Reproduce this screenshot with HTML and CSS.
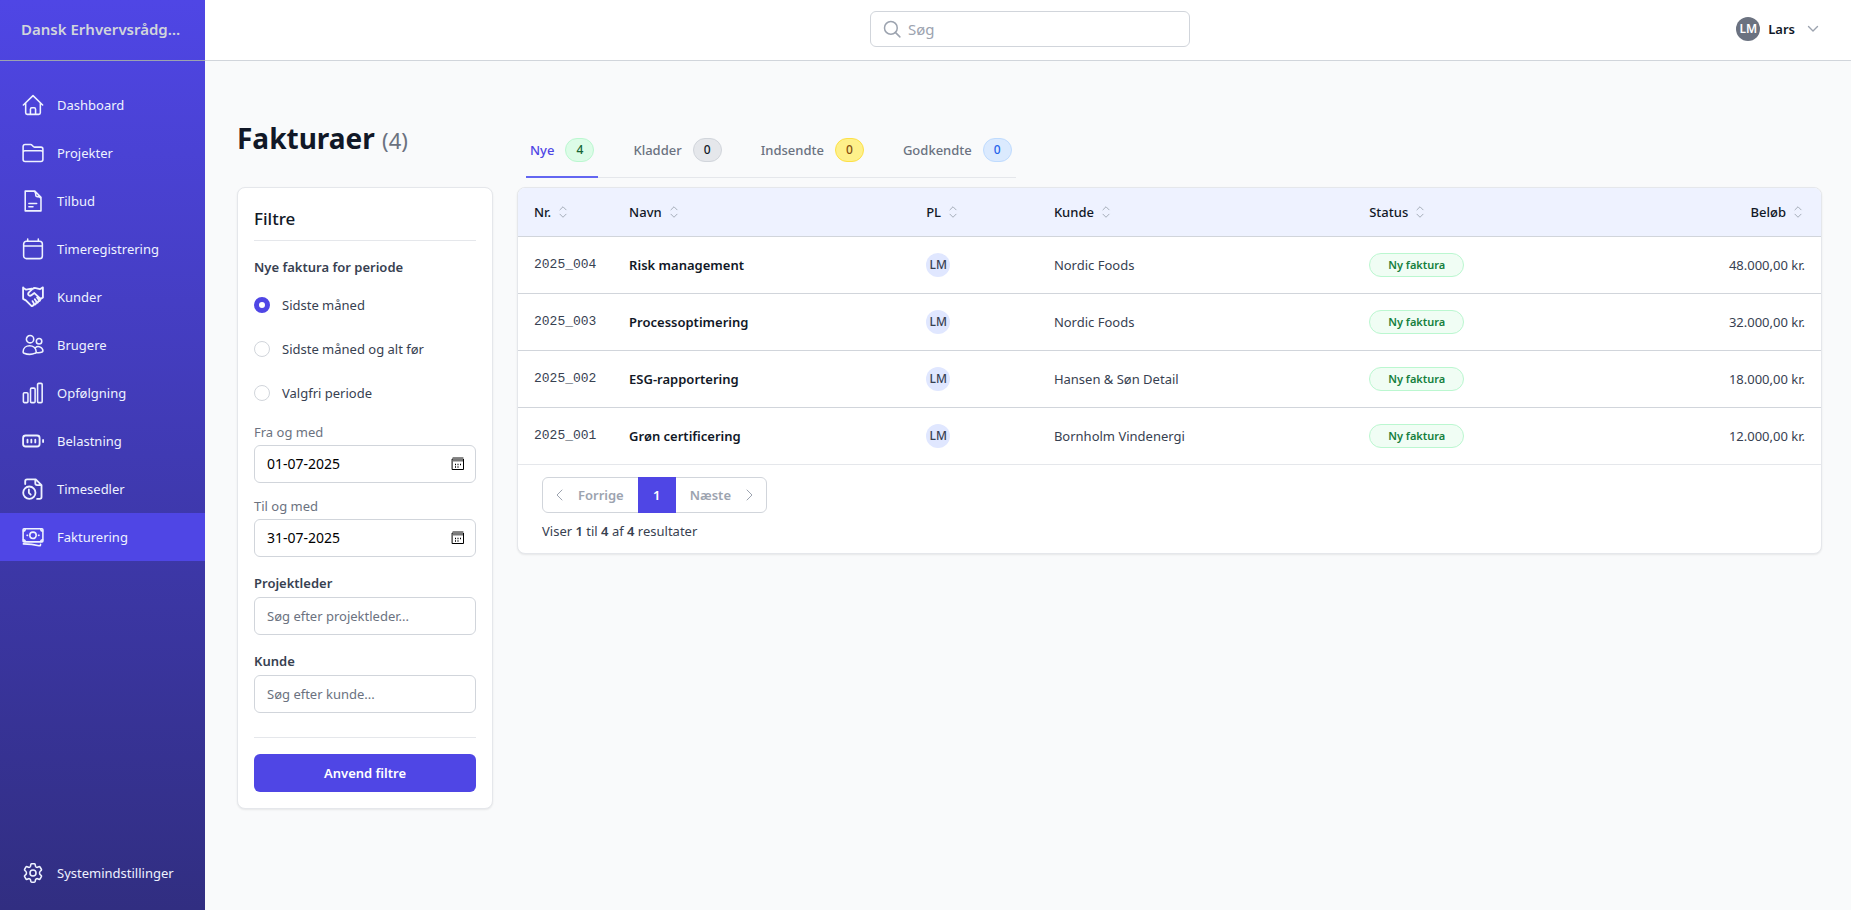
FILE: index.html
```html
<!DOCTYPE html>
<html lang="da">
<head>
    <meta charset="utf-8">
    <title>Fakturaer</title>
    <link rel="stylesheet" href="styles.css">
</head>

<body>
    <svg class="sprite" aria-hidden="true">
        <symbol id="sort" viewBox="0 0 16 16">
            <path d="M4.500 5.500l3.500-3.500 3.500 3.500M4.500 10.500l3.500 3.500 3.500-3.500"/>
        </symbol>
        <symbol id="calendar" viewBox="0 0 14 14">
            <path d="M1.500 2h11v10.500h-11z" stroke="#000" stroke-width="1"/>
            <path d="M2 .5h10" stroke="#888" stroke-width="1"/>
            <path d="M2 3.500h10" stroke="#777" stroke-width="2" stroke-linecap="butt"/>
            <path d="M4 7.500h1M6.500 7.500h1M9 7.500h1M4 10h1M6.500 10h1" stroke="#000" stroke-width="1.300" stroke-linecap="butt"/>
        </symbol>
    </svg>

    <div class="layout">
        <aside class="sidebar">
            <a class="brand" href="#">Dansk Erhvervsrådgivning</a>
            <nav class="menu">
                <a href="#"><svg viewBox="0 0 24 24"><path d="M1.500 12 12 1.800l10.500 10.200M4 10V20.500q0 1.700 1.700 1.700h12.600q1.700 0 1.700-1.700V10M9.200 22v-5.500q0-1.500 1.500-1.500h2.600q1.500 0 1.500 1.500v5.500"/></svg>Dashboard</a>
                <a href="#"><svg viewBox="0 0 24 24"><path d="M1.200 19V5q0-2.200 2.200-2.200h6q1 0 1.600.8l1.300 1.400q.5.600 1.300.600h7q2.200 0 2.200 2.200V19q0 2.200-2.200 2.200h-17.200q-2.200 0-2.200-2.200zM1.200 11.500q0-2 2-2h17.600q2 0 2 2"/></svg>Projekter</a>
                <a href="#"><svg viewBox="0 0 24 24"><path d="M3.500 1.200H14l6.700 6.700v14.900H3.500zM13 1.200q2 1 2 3.500v1q0 1.500 1.500 1.500h1q2 0 3.200 2M7.500 14.700h8.500M7.500 18.200h4.500"/></svg>Tilbud</a>
                <a href="#"><svg viewBox="0 0 24 24"><rect x="1.800" y="3.500" width="20.400" height="19" rx="3"/><path d="M2 8.800h20M6.200 1.200V3.500M17.800 1.200V3.500"/></svg>Timeregistrering</a>
                <a href="#"><svg class="bold" viewBox="0 0 24 24"><path d="M1.200 1.500v12.500l3 1.700 5.800 5.800q1.200.900 2.300-.300.300-.500.400-1.200 2 .800 2.800-1.600 2.100.200 2.300-1.900 2 0 2.200-2.200l2.800-1.800V1.500l-3.300 2-4.500-1.200q-2-.4-3.500.900L7.500 7q-1.400 1.700-.2 3 1.400 1.300 3.300-.1l2.900-2.200 6.500 6M1.200 2 4.500 4l6-1.200M11.500 16.500l1.500 2.500M14 14.500l2 3M16.500 12.500l2 2.800"/></svg>Kunder</a>
                <a href="#"><svg viewBox="0 0 24 24"><circle cx="8.800" cy="5.700" r="4"/><circle cx="18.600" cy="8" r="3"/><path d="M1.200 19.500C1.200 10.500 15.500 10.500 15.500 19.500q0 1-1 1.400-6 2.600-12.300 0-1-.4-1-1.400zM14.500 15c3.500-3 8.300 0 8.300 3.500q0 .8-.8 1.100-3 1.200-6 .6"/></svg>Brugere</a>
                <a href="#"><svg viewBox="0 0 24 24"><rect x="1.500" y="11.700" width="5" height="10.800" rx="1.200"/><rect x="9.300" y="6.700" width="5" height="15.800" rx="1.200"/><rect x="17" y="1.500" width="5" height="21" rx="1.200"/></svg>Opfølgning</a>
                <a href="#"><svg class="bold" viewBox="0 0 24 24"><rect x="1.200" y="6" width="18" height="12" rx="2.800"/><path d="M6 10.500v3M10.200 10.500v3M14.500 10.500v3M23 10.800v2.400"/></svg>Belastning</a>
                <a href="#"><svg class="bold" viewBox="0 0 24 24"><circle cx="8" cy="16" r="6.700"/><path d="M7.500 12.500v3.700l2 2M3.500 6.500V3.500q0-2 2-2h9.500l6.300 6.300v13q0 2-2 2h-2.800M14.500 1.500v4.300q0 2 2 2h4.800"/></svg>Timesedler</a>
                <a class="active" href="#"><svg viewBox="0 0 24 24"><rect x="1.200" y="3" width="21.600" height="14.300" rx="1"/><circle cx="12" cy="10.200" r="3.500"/><path d="M1.500 5.500q2 0 2-2.300M22.500 5.500q-2 0-2-2.300M1.500 15q2 0 2 2M22.500 15q-2 0-2 2M5.500 10.200h.6M18 10.200h.6M1.500 19.500q9.500 0 17 2 1.700.500 1.700-1v-.5"/></svg>Fakturering</a>
            </nav>
            <nav class="menu menu-bottom">
                <a href="#"><svg viewBox="0 0 24 24"><path d="M9.600 2.900c.1-.500.600-.9 1.100-.9h2.600c.500 0 1 .4 1.100.9l.3 1.600c.1.400.3.700.6.900l.5.300c.3.200.7.200 1.100.1l1.500-.6c.5-.2 1.100 0 1.400.5l1.300 2.200c.3.500.2 1.100-.3 1.400l-1.200 1.100c-.3.200-.4.600-.4 1v1.200c0 .4.100.7.400 1l1.200 1c.5.300.6 1 .3 1.400l-1.300 2.300c-.3.500-.9.700-1.400.5l-1.500-.6c-.4-.1-.8-.1-1.100.1l-.5.300c-.3.200-.5.500-.6.900l-.3 1.600c-.1.500-.6.900-1.100.9h-2.600c-.5 0-1-.4-1.100-.9l-.3-1.600c-.1-.4-.3-.7-.6-.9l-.5-.3c-.3-.2-.7-.2-1.100-.1l-1.500.6c-.5.200-1.100 0-1.400-.5l-1.300-2.300c-.3-.4-.2-1.100.3-1.400l1.200-1c.3-.3.400-.6.400-1v-1.200c0-.4-.1-.8-.4-1l-1.200-1.100c-.5-.3-.6-.9-.3-1.400l1.300-2.200c.3-.5.900-.7 1.400-.5l1.500.6c.4.100.8.100 1.100-.1l.5-.3c.3-.2.5-.5.600-.9z"/><circle cx="12" cy="12" r="3.300"/></svg>Systemindstillinger</a>
            </nav>
        </aside>

        <div class="page">
            <header class="topbar">
                <label class="search">
                    <svg viewBox="0 0 24 24"><circle cx="10.500" cy="10.500" r="8.500"/><path d="M16.500 16.500l6 6"/></svg>
                    <input type="search" placeholder="Søg" aria-label="Søg">
                </label>
                <button class="user" type="button">
                    <span class="user-avatar">LM</span>
                    Lars
                    <svg viewBox="0 0 12 12"><path d="M1.500 3.500l4.500 4.500 4.500-4.500"/></svg>
                </button>
            </header>

            <main class="content">
                <h1>Fakturaer <span>(4)</span></h1>

                <nav class="tabs">
                    <a class="active" href="#">Nye <span class="count green">4</span></a>
                    <a href="#">Kladder <span class="count gray">0</span></a>
                    <a href="#">Indsendte <span class="count yellow">0</span></a>
                    <a href="#">Godkendte <span class="count blue">0</span></a>
                </nav>

                <form class="card filters">
                    <h2>Filtre</h2>
                    <fieldset>
                        <legend>Nye faktura for periode</legend>
                        <label class="radio"><input type="radio" name="period" checked>Sidste måned</label>
                        <label class="radio"><input type="radio" name="period">Sidste måned og alt før</label>
                        <label class="radio"><input type="radio" name="period">Valgfri periode</label>
                    </fieldset>

                    <label class="date-label" for="from">Fra og med</label>
                    <div class="field date">
                        <input id="from" type="text" value="01-07-2025">
                        <svg><use href="#calendar"/></svg>
                    </div>
                    <label class="date-label" for="to">Til og med</label>
                    <div class="field date">
                        <input id="to" type="text" value="31-07-2025">
                        <svg><use href="#calendar"/></svg>
                    </div>

                    <label class="field-label" for="leader">Projektleder</label>
                    <div class="field"><input id="leader" type="text" placeholder="Søg efter projektleder..."></div>
                    <label class="field-label" for="customer">Kunde</label>
                    <div class="field"><input id="customer" type="text" placeholder="Søg efter kunde..."></div>

                    <div class="actions">
                        <button type="submit">Anvend filtre</button>
                    </div>
                </form>

                <section class="card invoices">
                    <table>
                        <colgroup>
                            <col class="col-nr">
                            <col class="col-name">
                            <col class="col-pl">
                            <col class="col-customer">
                            <col class="col-status">
                            <col>
                        </colgroup>
                        <thead>
                            <tr>
                                <th><button type="button">Nr. <svg><use href="#sort"/></svg></button></th>
                                <th><button type="button">Navn <svg><use href="#sort"/></svg></button></th>
                                <th><button type="button">PL <svg><use href="#sort"/></svg></button></th>
                                <th><button type="button">Kunde <svg><use href="#sort"/></svg></button></th>
                                <th><button type="button">Status <svg><use href="#sort"/></svg></button></th>
                                <th class="amount"><button type="button">Beløb <svg><use href="#sort"/></svg></button></th>
                            </tr>
                        </thead>
                        <tbody>
                            <tr>
                                <td class="nr">2025_004</td>
                                <td class="name">Risk management</td>
                                <td><span class="avatar">LM</span></td>
                                <td>Nordic Foods</td>
                                <td><span class="status">Ny faktura</span></td>
                                <td class="amount">48.000,00 kr.</td>
                            </tr>
                            <tr>
                                <td class="nr">2025_003</td>
                                <td class="name">Processoptimering</td>
                                <td><span class="avatar">LM</span></td>
                                <td>Nordic Foods</td>
                                <td><span class="status">Ny faktura</span></td>
                                <td class="amount">32.000,00 kr.</td>
                            </tr>
                            <tr>
                                <td class="nr">2025_002</td>
                                <td class="name">ESG-rapportering</td>
                                <td><span class="avatar">LM</span></td>
                                <td>Hansen &amp; Søn Detail</td>
                                <td><span class="status">Ny faktura</span></td>
                                <td class="amount">18.000,00 kr.</td>
                            </tr>
                            <tr>
                                <td class="nr">2025_001</td>
                                <td class="name">Grøn certificering</td>
                                <td><span class="avatar">LM</span></td>
                                <td>Bornholm Vindenergi</td>
                                <td><span class="status">Ny faktura</span></td>
                                <td class="amount">12.000,00 kr.</td>
                            </tr>
                        </tbody>
                    </table>

                    <div class="table-footer">
                        <div class="pagination">
                            <button type="button"><svg viewBox="0 0 12 12"><path d="M8 1L3 6l5 5"/></svg>Forrige</button>
                            <button class="current" type="button">1</button>
                            <button type="button">Næste<svg viewBox="0 0 12 12"><path d="M4 1l5 5-5 5"/></svg></button>
                        </div>
                        <p>Viser <b>1</b> til <b>4</b> af <b>4</b> resultater</p>
                    </div>
                </section>
            </main>
        </div>
    </div>
</body>
</html>
```
FILE: styles.css
```css
* {
    box-sizing: border-box;
}

body {
    margin: 0;
    background: #f9fafb;
    color: #374151;
    font-family: "Noto Sans", "Open Sans", sans-serif;
    font-size: 13px;
    line-height: 20px;
}

a {
    color: inherit;
    text-decoration: none;
}

button,
input {
    font: inherit;
    color: inherit;
}

button {
    padding: 0;
    border: none;
    background: none;
    cursor: pointer;
}

svg {
    flex: none;
    fill: none;
    stroke: currentColor;
    stroke-linecap: round;
    stroke-linejoin: round;
}

.sprite {
    display: none;
}

.layout {
    display: flex;
    min-height: 100vh;
}

/* Sidebar */
.sidebar {
    display: flex;
    flex-direction: column;
    flex: none;
    width: 205px;
    padding-bottom: 13px;
    background: linear-gradient(#4f46e5, #312e81);
    color: #eef2ff;
}

.brand {
    height: 61px;
    padding: 0 21px;
    border-bottom: 1px solid #9ca3af;
    overflow: hidden;
    color: #d1d5db;
    font-size: 15px;
    font-weight: 600;
    line-height: 58px;
    text-overflow: ellipsis;
    white-space: nowrap;
}

.menu {
    margin-top: 20px;
}

.menu-bottom {
    margin-top: auto;
}

.menu a {
    display: flex;
    align-items: center;
    gap: 13px;
    height: 48px;
    padding: 0 22px;
}

.menu a.active {
    background: #4f46e5;
}

.menu svg {
    width: 22px;
    height: 22px;
    stroke-width: 1.7;
}

.menu svg.bold {
    stroke-width: 2;
}

/* Top bar */
.page {
    flex: 1;
    min-width: 0;
}

.topbar {
    display: grid;
    grid-template-columns: 1fr 320px 1fr;
    align-items: center;
    height: 61px;
    padding: 0 32px 2px 36px;
    border-bottom: 1px solid #d1d5db;
    background: #fff;
}

.search {
    display: flex;
    grid-column: 2;
    align-items: center;
    gap: 7px;
    height: 36px;
    padding: 0 12px;
    border: 1px solid #d1d5db;
    border-radius: 6px;
    color: #9ca3af;
}

.search svg {
    width: 18px;
    height: 18px;
    stroke-width: 2;
}

.search input {
    flex: 1;
    min-width: 0;
    padding: 0;
    border: none;
    outline: none;
    font-size: 15px;
}

.search input::placeholder {
    color: #9ca3af;
}

.user {
    display: flex;
    align-items: center;
    justify-self: end;
    gap: 8px;
    color: #111827;
    font-weight: 600;
}

.user svg {
    width: 12px;
    height: 12px;
    margin-left: 4px;
    color: #9ca3af;
    stroke-width: 1.4;
}

.user-avatar,
.avatar {
    display: flex;
    align-items: center;
    justify-content: center;
    width: 24px;
    height: 24px;
    border-radius: 50%;
    font-size: 12px;
    font-weight: 600;
}

.user-avatar {
    background: #6b7280;
    color: #fff;
}

/* Content */
.content {
    display: grid;
    grid-template-columns: 256px 1fr;
    column-gap: 24px;
    align-items: start;
    padding: 55px 29px 32px 32px;
}

h1 {
    margin: 0;
    color: #111827;
    font-size: 28px;
    font-weight: 700;
    line-height: 44px;
}

h1 span {
    color: #6b7280;
    font-size: 22px;
    font-weight: 400;
}

.tabs {
    display: flex;
    gap: 31px;
    justify-self: start;
    margin: 11px 0 9px 9px;
    border-bottom: 1px solid #e5e7eb;
    color: #6b7280;
    font-weight: 500;
}

.tabs a {
    display: flex;
    align-items: center;
    gap: 11px;
    height: 51px;
    margin-bottom: -1px;
    padding: 0 4px 3px;
    border-bottom: 2px solid transparent;
}

.tabs a.active {
    border-color: #6366f1;
    color: #4f46e5;
}

.count {
    min-width: 29px;
    padding: 1px 10px;
    border: 1px solid;
    border-radius: 12px;
    font-size: 12px;
    text-align: center;
}

.count.green {
    border-color: #bbf7d0;
    background: #dcfce7;
    color: #166534;
}

.count.gray {
    border-color: #d1d5db;
    background: #e5e7eb;
    color: #111827;
}

.count.yellow {
    border-color: #fde047;
    background: #fef08a;
    color: #854d0e;
}

.count.blue {
    border-color: #bfdbfe;
    background: #dbeafe;
    color: #2563eb;
}

.card {
    border: 1px solid #e5e7eb;
    border-radius: 8px;
    background: #fff;
    box-shadow: 0 1px 2px rgba(0, 0, 0, .08);
}

/* Filters */
.filters {
    display: flex;
    flex-direction: column;
    padding: 17px 16px 16px;
}

.filters h2 {
    margin: 0 0 16px;
    padding-bottom: 7px;
    border-bottom: 1px solid #e5e7eb;
    color: #111827;
    font-size: 17px;
    font-weight: 500;
    line-height: 28px;
}

fieldset {
    min-width: 0;
    margin: 0 0 7px;
    padding: 0;
    border: none;
}

legend {
    margin-bottom: 6px;
    padding: 0;
    font-weight: 600;
}

.radio {
    display: flex;
    align-items: center;
    gap: 12px;
    height: 44px;
}

.radio input {
    width: 16px;
    height: 16px;
    margin: 0;
    border: 1px solid #d1d5db;
    border-radius: 50%;
    appearance: none;
}

.radio input:checked {
    border: 5px solid #4f46e5;
}

.date-label {
    margin-bottom: 3px;
    color: #6b7280;
}

.field {
    display: flex;
    align-items: center;
    height: 38px;
    padding: 0 12px;
    border: 1px solid #d1d5db;
    border-radius: 6px;
}

.field input {
    flex: 1;
    min-width: 0;
    padding: 0;
    border: none;
    outline: none;
}

.field input::placeholder {
    color: #6b7280;
}

.date {
    margin-bottom: 13px;
    padding-right: 10px;
    color: #000;
}

.date input {
    font-size: 14px;
}

.date svg {
    width: 14px;
    height: 14px;
}

.field-label {
    margin: 16px 0 4px;
    font-weight: 600;
}

.date + .field-label {
    margin-top: 3px;
}

.actions {
    margin-top: 24px;
    padding-top: 16px;
    border-top: 1px solid #e5e7eb;
}

.actions button {
    width: 100%;
    height: 38px;
    border-radius: 6px;
    background: #4f46e5;
    color: #fff;
    font-weight: 600;
}

/* Invoice table */
.invoices {
    overflow: hidden;
}

table {
    width: 100%;
    border-collapse: collapse;
    table-layout: fixed;
}

.col-nr {
    width: 7.3%;
}

.col-name {
    width: 22.8%;
}

.col-pl {
    width: 9.8%;
}

.col-customer {
    width: 24.2%;
}

.col-status {
    width: 18%;
}

th,
td {
    padding: 0 16px;
    text-align: left;
}

th {
    height: 48px;
    background: #eef2ff;
    color: #111827;
    font-weight: 500;
}

th button {
    display: inline-flex;
    align-items: center;
    gap: 5px;
}

th svg {
    width: 14px;
    height: 14px;
    color: #9ca3af;
}

tr {
    border-bottom: 1px solid #d1d5db;
}

tr:last-child td {
    border-bottom: 1px solid #e5e7eb;
}

td {
    height: 57px;
}

.nr {
    font-family: "Liberation Mono", monospace;
}

.name {
    color: #111827;
    font-weight: 600;
}

.avatar {
    background: #e0e7ff;
    color: #374151;
    font-weight: 500;
}

.status {
    display: inline-block;
    padding: 0 18px;
    border: 1px solid #bbf7d0;
    border-radius: 12px;
    background: #f0fdf4;
    color: #15803d;
    font-size: 11px;
    font-weight: 600;
    line-height: 22px;
}

.amount {
    text-align: right;
}

.table-footer {
    padding: 12px 24px;
}

.pagination {
    display: inline-flex;
    height: 36px;
    border: 1px solid #d1d5db;
    border-radius: 6px;
    color: #9ca3af;
    font-weight: 600;
}

.pagination button {
    display: flex;
    align-items: center;
    justify-content: center;
    gap: 12px;
    min-width: 38px;
    padding: 0 14px;
}

.pagination button:first-child {
    padding-left: 11px;
}

.pagination button:last-child {
    padding-right: 11px;
}

.pagination .current {
    margin: -1px 0;
    background: #4f46e5;
    color: #fff;
}

.pagination svg {
    width: 12px;
    height: 12px;
}

.table-footer p {
    margin: 8px 0 0;
}

.table-footer b {
    font-weight: 600;
}
```
